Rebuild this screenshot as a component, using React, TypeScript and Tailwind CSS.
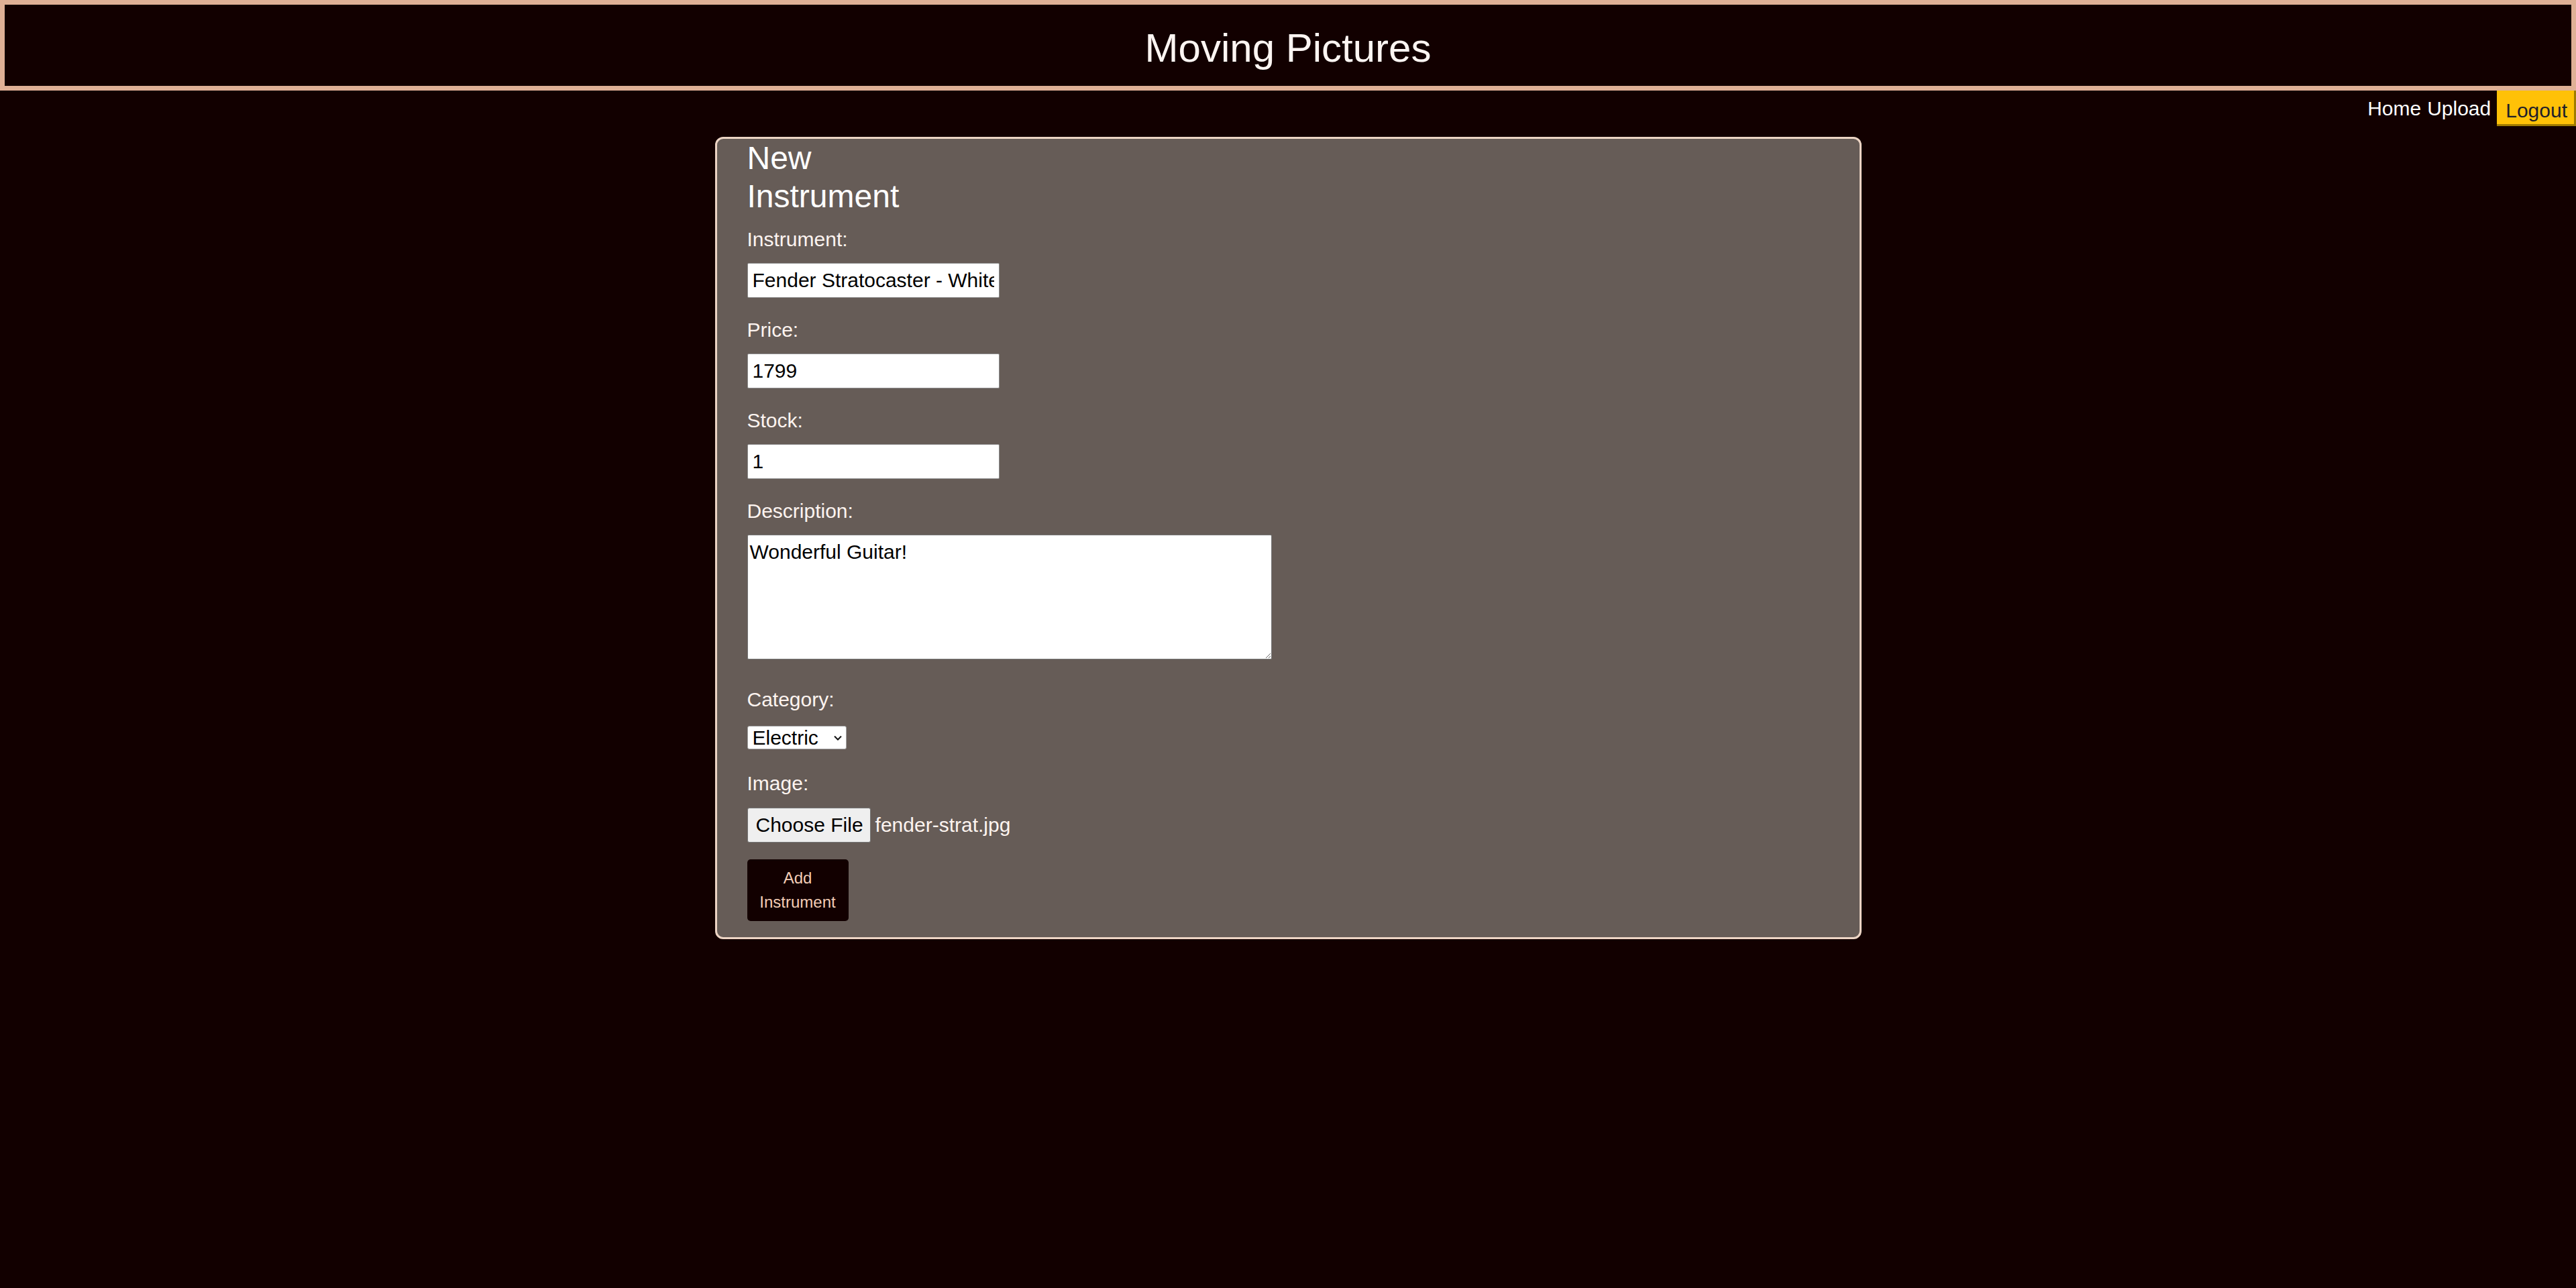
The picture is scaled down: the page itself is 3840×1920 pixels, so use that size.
import React from 'react';

const font = { fontFamily: '"Liberation Sans", Arial, sans-serif' };

function Field({ label, children, top }: { label: string; children: React.ReactNode; top: string }) {
  return (
    <div className={top}>
      <label className="block text-[30px] leading-[34px] text-[#fdf4f0]">{label}</label>
      {children}
    </div>
  );
}

export default function App() {
  return (
    <div className="min-h-screen bg-[#120000]" style={font}>
      <header className="border-[7px] border-[#dfb096] bg-[#120000] pt-[30px] pb-[22px] text-center">
        <h1 className="text-[60px] leading-[69px] text-[#fdf5f2]">Moving Pictures</h1>
      </header>

      <nav className="flex items-start justify-end gap-[9px] text-[30px] leading-[34px]">
        <a className="pt-[10px] text-white">Home</a>
        <a className="pt-[10px] text-white">Upload</a>
        <button className="h-[53px] border-r-[3px] border-b-[3px] border-[#a07b00] bg-[#ffc107] pt-[10px] pr-[10px] pl-[13px] text-left text-[#1e1e2a]">
          Logout
        </button>
      </nav>

      <div className="mx-auto mt-[16px] w-[1709px] rounded-[12px] border-[3px] border-[#ecd4c4] bg-[#665c57] pb-[24px] pl-[45px]">
        <h2 className="w-[300px] text-[48px] leading-[57px] font-normal text-white">New Instrument</h2>

        <Field label="Instrument:" top="mt-[19px]">
          <input
            className="mt-[18px] block h-[52px] w-[376px] rounded-[2px] border border-[#8d8d8d] bg-white px-[7px] text-[30px] text-black outline-none"
            defaultValue="Fender Stratocaster - White"
          />
        </Field>

        <Field label="Price:" top="mt-[31px]">
          <input
            className="mt-[18px] block h-[52px] w-[376px] rounded-[2px] border border-[#8d8d8d] bg-white px-[7px] text-[30px] text-black outline-none"
            defaultValue="1799"
          />
        </Field>

        <Field label="Stock:" top="mt-[31px]">
          <input
            className="mt-[18px] block h-[52px] w-[376px] rounded-[2px] border border-[#8d8d8d] bg-white px-[7px] text-[30px] text-black outline-none"
            defaultValue="1"
          />
        </Field>

        <Field label="Description:" top="mt-[31px]">
          <textarea
            className="mt-[18px] block h-[186px] w-[782px] resize rounded-[2px] border border-[#767676] bg-white px-[3px] pt-[7px] text-[30px] leading-[35px] text-black outline-none"
            defaultValue="Wonderful Guitar!"
          />
        </Field>

        <Field label="Category:" top="mt-[43px]">
          <div className="relative mt-[22px] w-[148px]">
            <select
              className="block h-[35px] w-[148px] appearance-none rounded-[3px] border border-[#a3a3a3] bg-white pl-[7px] text-[30px] leading-[33px] text-black outline-none"
              defaultValue="Electric"
            >
              <option>Electric</option>
              <option>Acoustic</option>
              <option>Bass</option>
            </select>
            <svg className="pointer-events-none absolute top-[14px] left-[129px]" width="12" height="8" viewBox="0 0 12 8">
              <path d="M1 1.5 L6 6.5 L11 1.5" fill="none" stroke="#111" strokeWidth="2" />
            </svg>
          </div>
        </Field>

        <Field label="Image:" top="mt-[34px]">
          <div className="mt-[19px] flex items-center">
            <button className="h-[52px] rounded-[3px] border border-[#767676] bg-[#efefef] pr-[10px] pl-[12px] text-[30px] leading-[34px] text-black">
              Choose File
            </button>
            <span className="ml-[7px] text-[30px] leading-[34px] text-[#fdf4f0]">fender-strat.jpg</span>
          </div>
        </Field>

        <button className="mt-[25px] block h-[92px] w-[151px] rounded-[5px] bg-[#120000] px-[18px] py-[10px] text-center text-[24px] leading-[36px] text-[#f3cdb6]">
          Add Instrument
        </button>
      </div>
    </div>
  );
}
